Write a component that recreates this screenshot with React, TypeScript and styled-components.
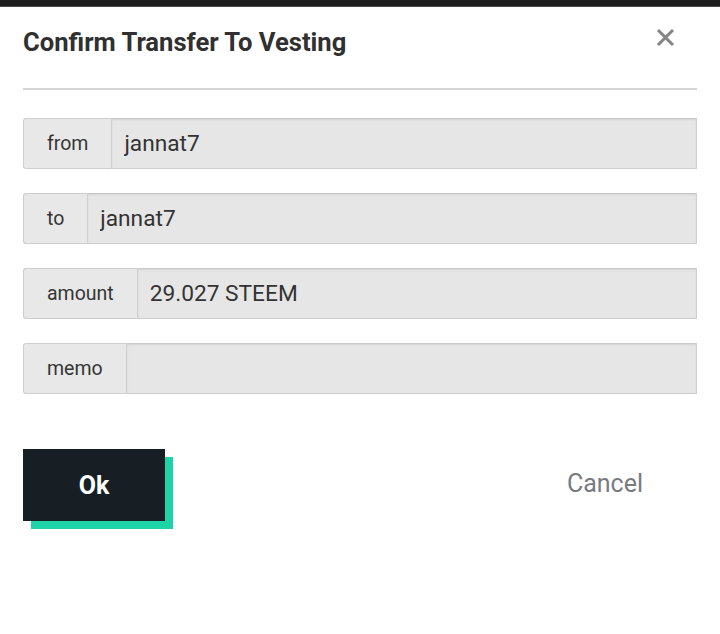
import React from "react";
import styled, { createGlobalStyle } from "styled-components";

const Global = createGlobalStyle`
  html, body { margin: 0; padding: 0; background: #ffffff; }
  body { font-family: Roboto, "Noto Sans", "Liberation Sans", sans-serif; }
  * { box-sizing: border-box; }
`;

const TopStrip = styled.div`
  height: 7px;
  background: #1d1d1d;
  border-bottom: 1px solid #4a4a4a;
`;

const Modal = styled.div`
  position: relative;
  padding: 20px 23px 0 23px;
  height: 627px;
  background: #fff;
`;

const Title = styled.h1`
  margin: 0;
  font-size: 25.6px;
  line-height: 30px;
  font-weight: 700;
  color: #303030;
`;

const CloseButton = styled.button`
  position: absolute;
  top: 20px;
  right: 45px;
  width: 20px;
  height: 20px;
  padding: 0;
  border: 0;
  background: transparent;
  display: flex;
  align-items: center;
  justify-content: center;
  cursor: pointer;
`;

const Divider = styled.hr`
  margin: 31px 0 0 0;
  border: 0;
  height: 2px;
  background: #d4d4d4;
`;

const Fields = styled.div`
  display: flex;
  flex-direction: column;
  gap: 24px;
  margin-top: 28px;
`;

const Group = styled.div`
  display: flex;
  height: 51px;
`;

const Label = styled.span`
  display: flex;
  align-items: center;
  padding: 0 23px;
  background: #e8e8e8;
  border: 1px solid #cdcdcd;
  border-right: 1px solid #cfcfcf;
  border-radius: 3px 0 0 3px;
  font-size: 19.5px;
  color: #353535;
`;

const Input = styled.input`
  flex: 1;
  min-width: 0;
  height: 100%;
  padding: 0 12px;
  background: #e6e6e6;
  border: 1px solid #cdcdcd;
  border-left: 0;
  border-top-color: #c8c8c8;
  border-right-color: #d0d0d0;
  box-shadow: inset 0 1px 2px rgba(0, 0, 0, 0.08);
  font-family: inherit;
  font-size: 22.7px;
  color: #333;
  outline: none;
  -webkit-text-fill-color: #333;
  opacity: 1;
`;

const Actions = styled.div`
  display: flex;
  align-items: center;
  justify-content: space-between;
  margin-top: 55px;
`;

const OkButton = styled.button`
  width: 142px;
  height: 72px;
  border: 0;
  background: #171f24;
  box-shadow: 8px 8px 0 #1fd3a9;
  color: #fff;
  font-family: inherit;
  font-size: 25px;
  font-weight: 700;
  cursor: pointer;
`;

const CancelButton = styled.button`
  border: 0;
  background: transparent;
  margin-right: 54px;
  margin-bottom: 4px;
  padding: 0;
  font-family: inherit;
  font-size: 25px;
  color: #777b7f;
  cursor: pointer;
`;

const fields = [
  { label: "from", value: "jannat7" },
  { label: "to", value: "jannat7" },
  { label: "amount", value: "29.027 STEEM" },
  { label: "memo", value: "" },
];

export default function App() {
  return (
    <>
      <Global />
      <TopStrip />
      <Modal>
        <Title>Confirm Transfer To Vesting</Title>
        <CloseButton aria-label="close">
          <svg width="19" height="19" viewBox="0 0 19 19">
            <path d="M2 2 L17 17 M17 2 L2 17" stroke="#848484" strokeWidth="3" strokeLinecap="butt" />
          </svg>
        </CloseButton>
        <Divider />
        <Fields>
          {fields.map((f) => (
            <Group key={f.label}>
              <Label>{f.label}</Label>
              <Input disabled value={f.value} readOnly />
            </Group>
          ))}
        </Fields>
        <Actions>
          <OkButton>Ok</OkButton>
          <CancelButton>Cancel</CancelButton>
        </Actions>
      </Modal>
    </>
  );
}
